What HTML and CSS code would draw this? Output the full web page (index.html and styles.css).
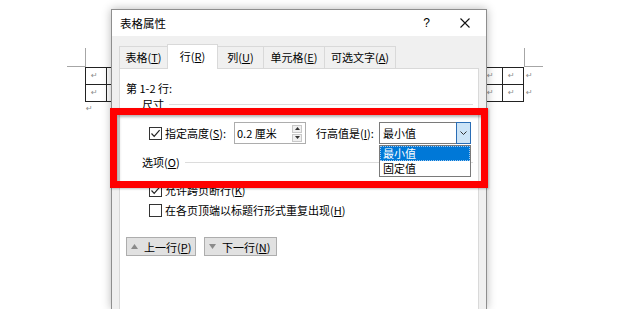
FILE: index.html
```html
<!DOCTYPE html>
<html lang="zh-CN">
<head>
    <meta charset="UTF-8">
    <meta name="viewport" content="width=device-width, initial-scale=1.0">
    <title>表格属性</title>
    <link rel="stylesheet" href="styles.css">
</head>
<body>
    <!-- Word document behind the dialog -->
    <div class="doc">
        <div class="marks">
            <div class="mark mark-left"></div>
            <div class="mark mark-right"></div>
        </div>
        <div class="doc-table-wrap">
            <div class="doc-table">
                <div class="cell">↵</div>
                <div class="cell"></div>
                <div class="cell">↵</div>
                <div class="cell">↵</div>
                <div class="cell">↵</div>
                <div class="cell"></div>
                <div class="cell">↵</div>
                <div class="cell">↵</div>
            </div>
            <div class="eol-marks">
                <span>↵</span>
                <span>↵</span>
            </div>
        </div>
        <div class="para-mark">↵</div>
    </div>

    <!-- Table properties dialog -->
    <div class="dialog">
        <div class="titlebar">
            <span class="title">表格属性</span>
            <span class="help">?</span>
            <svg class="close" width="10" height="10" viewBox="0 0 10 10">
                <path d="M0.5 0.5 L9.5 9.5 M9.5 0.5 L0.5 9.5" stroke="#111" stroke-width="1.1" fill="none"/>
            </svg>
        </div>
        <div class="dialog-body">
            <div class="tabs">
                <div class="tab">表格(<u>T</u>)</div>
                <div class="tab active">行(<u>R</u>)</div>
                <div class="tab">列(<u>U</u>)</div>
                <div class="tab">单元格(<u>E</u>)</div>
                <div class="tab">可选文字(<u>A</u>)</div>
            </div>
            <div class="panel">
                <div class="rows-label">第 1-2 行:</div>

                <div class="group-title"><span>尺寸</span><div class="group-line"></div></div>
                <div class="size-row">
                    <span class="check">
                        <svg width="11" height="11" viewBox="0 0 11 11">
                            <path d="M1.5 5.5 L4.2 8.3 L9.6 2.2" stroke="#222" stroke-width="1.2" fill="none"/>
                        </svg>
                    </span>
                    <span class="size-label">指定高度(<u>S</u>):</span>
                    <div class="spin-input">
                        <span class="spin-value">0.2 厘米</span>
                        <div class="spin">
                            <div class="spin-btn"><svg width="5" height="3" viewBox="0 0 5 3"><path d="M0 3 L2.5 0 L5 3 Z" fill="#333"/></svg></div>
                            <div class="spin-btn"><svg width="5" height="3" viewBox="0 0 5 3"><path d="M0 0 L2.5 3 L5 0 Z" fill="#333"/></svg></div>
                        </div>
                    </div>
                    <span class="rule-label">行高值是(<u>I</u>):</span>
                    <div class="select">
                        <span class="select-value">最小值</span>
                        <div class="drop-btn">
                            <svg width="7" height="4" viewBox="0 0 7 4"><path d="M0.5 0.5 L3.5 3.5 L6.5 0.5" stroke="#333" fill="none"/></svg>
                        </div>
                        <div class="droplist">
                            <div class="drop-item selected">最小值</div>
                            <div class="drop-item">固定值</div>
                        </div>
                    </div>
                </div>

                <div class="group-title options"><span>选项(<u>O</u>)</span><div class="group-line"></div></div>
                <div class="check-row">
                    <span class="check">
                        <svg width="11" height="11" viewBox="0 0 11 11">
                            <path d="M1.5 5.5 L4.2 8.3 L9.6 2.2" stroke="#222" stroke-width="1.2" fill="none"/>
                        </svg>
                    </span>
                    <span>允许跨页断行(<u>K</u>)</span>
                </div>
                <div class="check-row">
                    <span class="check"></span>
                    <span>在各页顶端以标题行形式重复出现(<u>H</u>)</span>
                </div>

                <div class="nav-buttons">
                    <button class="nav-btn prev">
                        <svg width="7" height="5" viewBox="0 0 7 5"><path d="M0 5 L3.5 0 L7 5 Z" fill="#8a8a8a"/></svg>
                        <span>上一行(<u>P</u>)</span>
                    </button>
                    <button class="nav-btn next">
                        <svg width="7" height="5" viewBox="0 0 7 5"><path d="M0 0 L3.5 5 L7 0 Z" fill="#8a8a8a"/></svg>
                        <span>下一行(<u>N</u>)</span>
                    </button>
                </div>
            </div>
        </div>
    </div>

    <!-- red annotation frame -->
    <div class="highlight"></div>
</body>
</html>
```

FILE: styles.css
```css
body {
    margin: 0;
    width: 620px;
    height: 309px;
    overflow: hidden;
    position: relative;
    background-color: #ffffff;
    font-family: "Noto Sans CJK SC", sans-serif;
    font-size: 11px;
    color: #000;
}

/* document */
.doc {
    padding-top: 48px;
}
.marks {
    display: flex;
    height: 19px;
}
.mark {
    width: 18px;
    height: 18px;
    border-bottom: 1px solid #a6a6a6;
}
.mark-left {
    margin-left: 67px;
    border-right: 1px solid #a6a6a6;
}
.mark-right {
    margin-left: 438px;
    border-left: 1px solid #a6a6a6;
}
.doc-table-wrap {
    display: flex;
    margin-left: 85px;
}
.doc-table {
    display: grid;
    grid-template-columns: 21px 375px 21px 21px;
    grid-template-rows: 17px 17px;
    border-left: 1px solid #222;
    border-top: 1px solid #222;
}
.cell {
    border-right: 1px solid #222;
    border-bottom: 1px solid #222;
    font-family: "DejaVu Sans", sans-serif;
    font-size: 8px;
    line-height: 15px;
    color: #8c8c8c;
    padding-left: 5px;
}
.eol-marks {
    display: flex;
    flex-direction: column;
    padding-left: 2px;
    padding-top: 1px;
    font-family: "DejaVu Sans", sans-serif;
    font-size: 8px;
    color: #8c8c8c;
}
.eol-marks span {
    height: 17px;
    line-height: 15px;
}
.para-mark {
    margin-left: 86px;
    font-family: "DejaVu Sans", sans-serif;
    font-size: 8px;
    line-height: 14px;
    color: #8c8c8c;
}

/* dialog */
.dialog {
    position: absolute;
    left: 111px;
    top: 9px;
    width: 376px;
    height: 300px;
    box-sizing: border-box;
    border: 1px solid #8e8e8e;
    border-bottom: none;
    background-color: #f0f0f0;
    box-shadow: 0 0 9px rgba(0,0,0,0.28);
    display: flex;
    flex-direction: column;
}
.titlebar {
    flex-shrink: 0;
    height: 26px;
    display: flex;
    align-items: center;
    padding: 0 16px 0 8px;
    background-color: #ffffff;
}
.title {
    flex: 1;
    font-size: 11.5px;
    line-height: 16px;
}
.help {
    font-family: "Liberation Sans", sans-serif;
    font-size: 12px;
    margin-right: 30px;
}
.close {
    display: block;
}
.dialog-body {
    flex: 1;
    display: flex;
    flex-direction: column;
    padding: 8px 7px 0 7px;
}
.tabs {
    flex-shrink: 0;
    display: grid;
    grid-template-columns: 48px 50px 46px 61px 71px;
    align-items: end;
    height: 24px;
}
.tab {
    height: 22px;
    box-sizing: border-box;
    border: 1px solid #d9d9d9;
    border-bottom: none;
    margin-right: -1px;
    background-color: #f0f0f0;
    text-align: center;
    line-height: 21px;
}
.tab.active {
    height: 25px;
    margin-bottom: -1px;
    background-color: #ffffff;
    position: relative;
    line-height: 23px;
}
.panel {
    flex: 1;
    background-color: #ffffff;
    border: 1px solid #d9d9d9;
    border-bottom: none;
    padding: 0 5px 0 6px;
    line-height: 16px;
}
.rows-label {
    margin-top: 11px;
}
.group-title {
    display: flex;
    align-items: center;
    margin-left: 16px;
    height: 16px;
}
.group-title.options {
    margin-top: 10px;
}
.group-line {
    flex: 1;
    margin-left: 5px;
    margin-top: 1px;
    border-top: 1px solid #dcdcdc;
}
.check {
    width: 13px;
    height: 13px;
    box-sizing: border-box;
    border: 1px solid #333;
    background-color: #fff;
    display: flex;
    align-items: center;
    justify-content: center;
    margin-right: 3px;
}
.size-row {
    display: flex;
    align-items: center;
    height: 22px;
    margin-top: 10px;
    margin-left: 23px;
}
.size-label {
    width: 69px;
}
.spin-input {
    width: 72px;
    height: 22px;
    box-sizing: border-box;
    border: 1px solid #adadad;
    display: flex;
    align-items: center;
}
.spin-value {
    flex: 1;
    padding-left: 2px;
}
.spin {
    display: flex;
    flex-direction: column;
    gap: 1px;
    margin-right: 3px;
}
.spin-btn {
    width: 10px;
    height: 8px;
    box-sizing: border-box;
    border: 1px solid #c8c8c8;
    background-color: #f0f0f0;
    display: flex;
    align-items: center;
    justify-content: center;
}
.rule-label {
    width: 63px;
    margin-left: 10px;
}
.select {
    position: relative;
    width: 92px;
    height: 22px;
    box-sizing: border-box;
    border: 1px solid #7a7a7a;
    display: flex;
    align-items: center;
}
.select-value {
    flex: 1;
    padding-left: 3px;
}
.drop-btn {
    width: 15px;
    height: 22px;
    box-sizing: border-box;
    margin-right: -1px;
    border: 1px solid #2a6db5;
    background-color: #cce4f7;
    display: flex;
    align-items: center;
    justify-content: center;
}
.droplist {
    position: absolute;
    top: 22px;
    left: -1px;
    width: 92px;
    box-sizing: border-box;
    border: 1px solid #7a7a7a;
    background-color: #fff;
    z-index: 2;
}
.drop-item {
    height: 15px;
    line-height: 15px;
    padding-left: 3px;
}
.drop-item.selected {
    background-color: #0078d7;
    color: #fff;
    outline: 1px dotted #a0c8f0;
    outline-offset: -1px;
}
.check-row {
    display: flex;
    align-items: center;
    height: 20px;
    margin-left: 23px;
}
.options + .check-row {
    margin-top: 10px;
}
.nav-buttons {
    display: flex;
    gap: 8px;
    margin-top: 17px;
}
.nav-btn {
    height: 19px;
    box-sizing: border-box;
    border: 1px solid #adadad;
    background-color: #e1e1e1;
    font-family: inherit;
    font-size: 11px;
    line-height: 16px;
    color: #000;
    padding: 0 0 0 4px;
    display: flex;
    align-items: center;
    gap: 6px;
}
.nav-btn.prev {
    width: 70px;
}
.nav-btn.next {
    width: 73px;
}

/* red annotation frame */
.highlight {
    position: absolute;
    left: 110px;
    top: 108px;
    width: 378px;
    height: 80px;
    box-sizing: border-box;
    border: 7px solid #ff0000;
    box-shadow: inset 2px 2px 3px rgba(0,0,0,0.3), 1px 1px 2px rgba(0,0,0,0.25);
}
```
